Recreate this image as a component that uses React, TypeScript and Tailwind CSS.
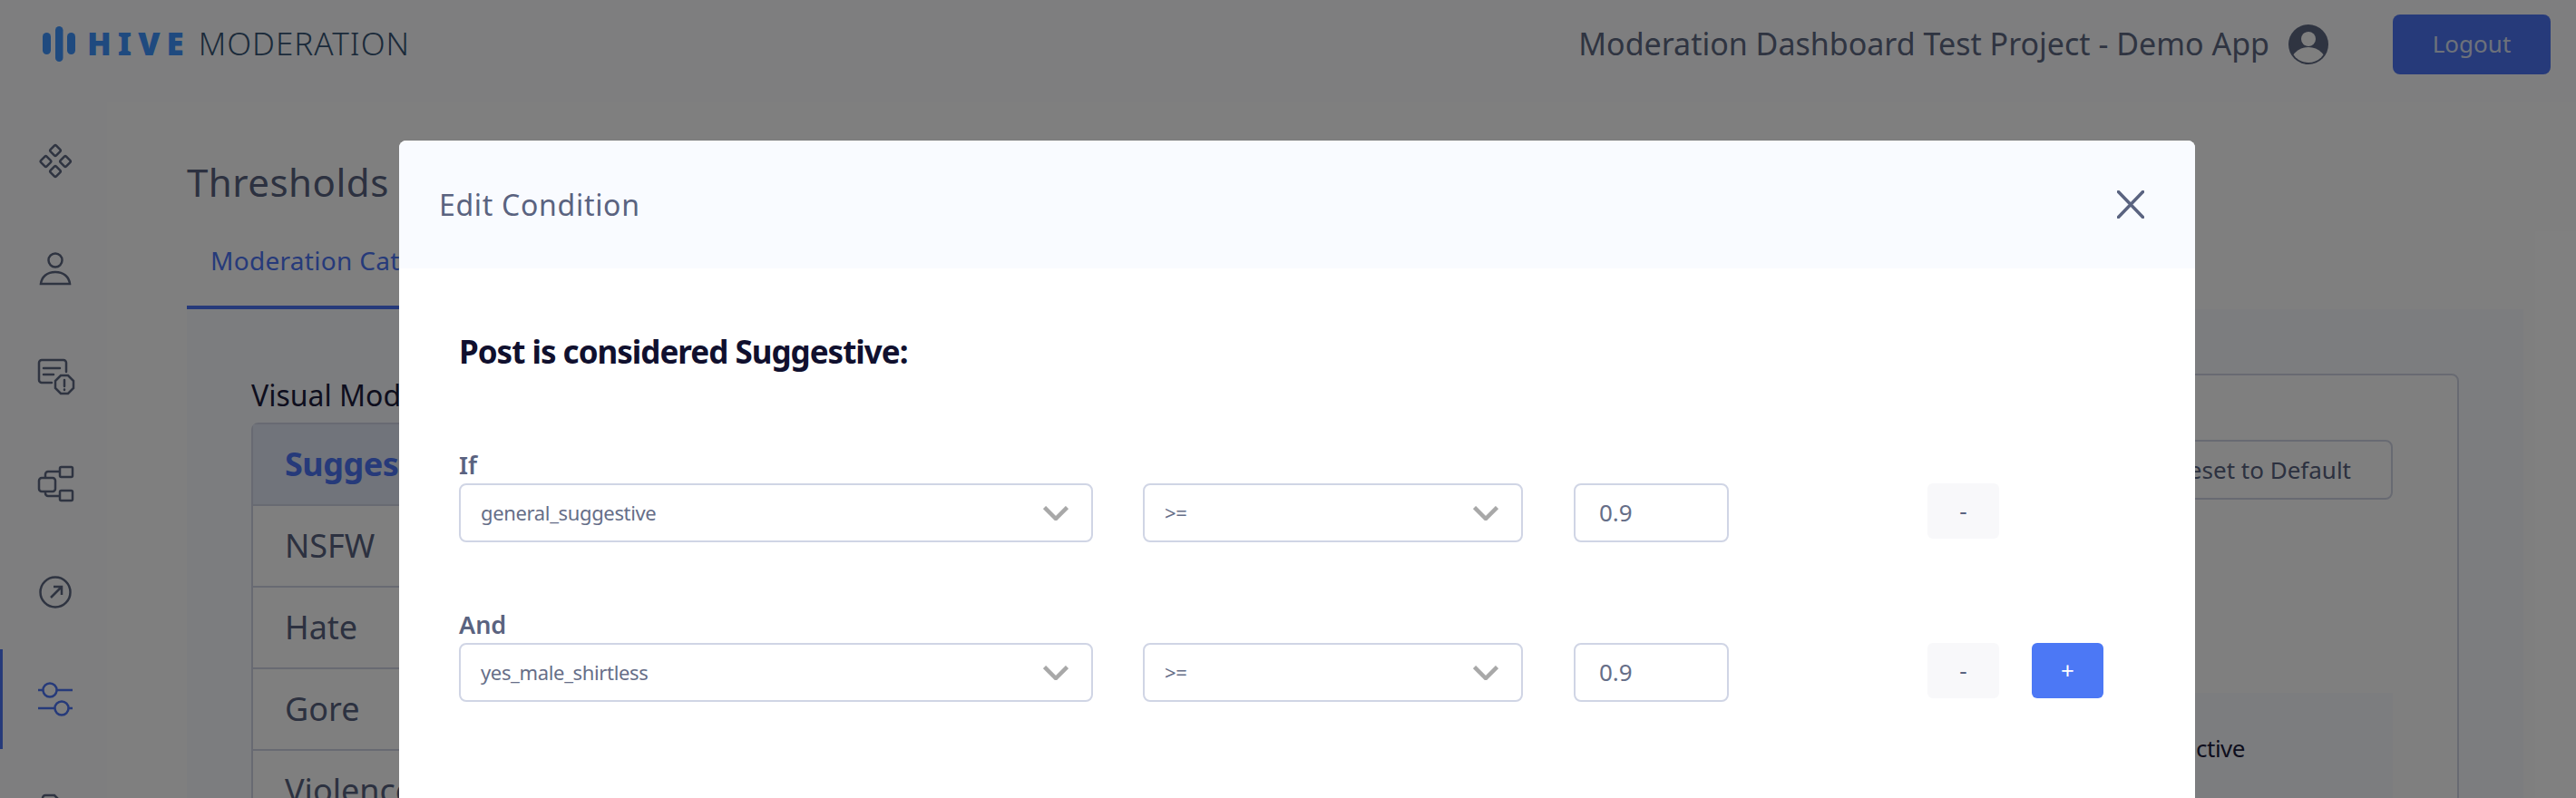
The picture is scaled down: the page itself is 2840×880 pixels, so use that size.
import React from 'react'

function Sidebar() {
  const icons = [
    <g key="a" fill="none" stroke="#5e6882" strokeWidth="2.5">
      <rect x="15.5" y="3.5" width="9" height="9" rx="1.5" transform="rotate(45 20 8)" />
      <rect x="5" y="15.5" width="9" height="9" rx="1.5" transform="rotate(45 9.5 20)" />
      <rect x="26.5" y="15.5" width="9" height="9" rx="1.5" transform="rotate(45 31 20)" />
      <rect x="15.5" y="26.5" width="9" height="9" rx="1.5" transform="rotate(45 20 31)" />
    </g>,
    <g key="b" fill="none" stroke="#5e6882" strokeWidth="2.5">
      <circle cx="20" cy="10" r="7.5" />
      <path d="M4 36 C5 28 11 23 20 23 C29 23 35 28 36 36 Z" />
    </g>,
    <g key="c" fill="none" stroke="#5e6882" strokeWidth="2.5" strokeLinecap="round">
      <path d="M16 27 H5 a3 3 0 0 1-3-3 V5 a3 3 0 0 1 3-3 H29 a3 3 0 0 1 3 3 V15" />
      <path d="M7 11 H25 M7 18 H18" />
      <path d="M26 19 H34 L40 25 V33 L34 39 H26 L20 33 V25 Z" />
      <path d="M30 24 V31 M30 34.5 V35" />
    </g>,
    <g key="d" fill="none" stroke="#5e6882" strokeWidth="2.5">
      <rect x="2" y="13" width="18" height="15" rx="3" />
      <rect x="25" y="1" width="14" height="11" rx="1.5" />
      <rect x="25" y="27" width="14" height="11" rx="1.5" />
      <path d="M9 13 V9 a3 3 0 0 1 3-3 H25 M9 28 V30 a3 3 0 0 0 3 3 H25" />
    </g>,
    <g key="e" fill="none" stroke="#5e6882" strokeWidth="2.5">
      <circle cx="20" cy="20" r="16.5" />
      <path d="M15 26 L27 14 M18 14 H27 V23" />
    </g>,
    <g key="f" fill="#fff" stroke="#4c74f4" strokeWidth="2.5">
      <path d="M1 10 H39 M1 30 H39" />
      <circle cx="14" cy="10" r="7.5" />
      <circle cx="27" cy="30" r="7.5" />
    </g>,
    <g key="g" fill="none" stroke="#5e6882" strokeWidth="2.5">
      <path d="M6 34 V10 a3 3 0 0 1 3-3 H19 L27 15 V34 Z" />
    </g>,
  ]

  return (
    <div className="w-[118px] shrink-0 bg-[#fcfdff] pt-[10px] flex flex-col gap-[8.67px]">
      {icons.map((icon, i) => (
        <div
          key={i}
          className={`h-[110px] shrink-0 flex items-center justify-center border-l-[3px] ${i === 5 ? 'border-[#4c74f4]' : 'border-transparent'}`}
        >
          <svg width="40" height="40" viewBox="0 0 40 40" className="overflow-visible">
            {icon}
          </svg>
        </div>
      ))}
    </div>
  )
}

function Chevron() {
  return (
    <svg width="28" height="16" viewBox="0 0 28 16" fill="none" stroke="#a8a8a8" strokeWidth="4.5">
      <path d="M1.5 1.5 L14 14 L26.5 1.5" />
    </svg>
  )
}

function Select({ value, width }: { value: string; width: string }) {
  return (
    <div className={`${width} h-[65px] border-2 border-[#d0d5e5] rounded-lg flex items-center justify-between pl-[22px] pr-[25px]`}>
      <span className="text-[22px] tracking-[-0.35px] text-[#666e88]">{value}</span>
      <Chevron />
    </div>
  )
}

function ConditionRow({ label, value, plus }: { label: string; value: string; plus?: boolean }) {
  return (
    <div>
      <div className="h-[40px] leading-[40px] text-[27px] font-semibold text-[#5a6380]">{label}</div>
      <div className="flex">
        <Select value={value} width="w-[699px]" />
        <div className="ml-[55px]">
          <Select value=">=" width="w-[419px]" />
        </div>
        <div className="ml-[56px] w-[171px] h-[65px] border-2 border-[#d0d5e5] rounded-lg flex items-center pl-[26px] text-[26px] text-[#666e88]">
          0.9
        </div>
        <div className="ml-[219px] w-[79px] h-[61px] rounded-md bg-[#f8f8fa] flex items-center justify-center text-[26px] text-[#5a6380]">
          -
        </div>
        {plus && (
          <div className="ml-[36px] w-[79px] h-[61px] rounded-md bg-[#4c78f5] flex items-center justify-center text-[26px] text-white">
            +
          </div>
        )}
      </div>
    </div>
  )
}

export default function App() {
  const rows = ['NSFW', 'Hate', 'Gore', 'Violence']

  return (
    <div className="relative w-[2840px] h-[880px] overflow-hidden bg-white font-['Noto_Sans',sans-serif]">
      {/* page under the dialog */}
      <header className="h-[113px] bg-[#fcfdff] flex items-center pl-[47px] pr-[28px] pb-[16px]">
        <svg width="36" height="39" viewBox="0 0 36 39" fill="#3e94ff" className="mr-[13px]">
          <rect x="0" y="7" width="9" height="24" rx="4.5" />
          <rect x="14" y="0" width="8.5" height="39" rx="4.25" />
          <rect x="27" y="7" width="9" height="24" rx="4.5" />
        </svg>
        <span className="text-[35px] font-black tracking-[7px] text-[#3e94ff]">HIVE</span>
        <span className="ml-[9px] text-[35px] font-light tracking-[1px] text-[#365474]">MODERATION</span>
        <span className="ml-auto text-[34px] text-[#5e6882]">Moderation Dashboard Test Project - Demo App</span>
        <svg width="44" height="44" viewBox="0 0 44 44" className="ml-[21px]">
          <clipPath id="avatar">
            <circle cx="22" cy="22" r="20" />
          </clipPath>
          <circle cx="22" cy="22" r="22" fill="#5e6882" />
          <circle cx="22" cy="16" r="8" fill="#fff" />
          <circle cx="22" cy="46" r="21" fill="#fff" clipPath="url(#avatar)" />
        </svg>
        <div className="ml-[71px] w-[174px] h-[66px] rounded-lg bg-[#4c74f4] flex items-center justify-center text-[26px] text-[#dbe2f5]">
          Logout
        </div>
      </header>

      <div className="flex h-[767px]">
        <Sidebar />
        <main className="flex-1 pl-[88px] pr-[58px] flex flex-col">
          <h1 className="mt-[60px] h-[56px] leading-[56px] text-[42px] tracking-[0.5px] text-[#586280]">Thresholds</h1>
          <div className="h-[113px] flex">
            <div className="w-[420px] pl-[26px] pt-[37px] text-[28px] tracking-[0.3px] text-[#4c74f4] border-b-[5px] border-[#4c74f4] box-border h-[113px]">
              Moderation Categories
            </div>
          </div>
          <div className="flex-1 bg-[#f9fbff] pl-[71px] pr-[71px] flex -mt-[1px]">
            <div className="w-[420px] pt-[71px]">
              <div className="h-[54px] text-[32px] text-[#1c1d3c]">Visual Moderation</div>
              <div className="border-2 border-[#d0d5e5] rounded-t-lg">
                <div className="h-[88px] bg-[#e2e8f6] flex items-center pl-[35px] text-[36px] font-bold tracking-[-0.5px] text-[#4c74f4]">Suggestive</div>
                {rows.map(r => (
                  <div key={r} className="h-[90px] border-t-2 border-[#d0d5e5] bg-white flex items-center pl-[35px] text-[36px] text-[#586280]">
                    {r}
                  </div>
                ))}
              </div>
            </div>
            <div className="flex-1 ml-[60px] mt-[71px] bg-white border-2 border-[#d0d5e5] rounded-lg pr-[71px]">
              <div className="mt-[71px] flex justify-end">
                <div className="w-[400px] h-[66px] border-2 border-[#d0d5e5] rounded-lg flex items-center justify-end pr-[44px] text-[26px] text-[#586280]">
                  Reset to Default
                </div>
              </div>
              <div className="mt-[213px] ml-[71px] h-[200px] bg-[#f9fbff] flex justify-end pr-[163px] pt-[42px] text-[26px] tracking-[-0.5px] text-[#1c1d3c]">
                Inactive
              </div>
            </div>
          </div>
        </main>
      </div>

      {/* dialog */}
      <div className="absolute inset-0 bg-black/50 pt-[155px] pl-[440px] pr-[420px]">
        <div className="h-[900px] bg-white rounded-t-lg overflow-hidden">
          <div className="h-[141px] bg-[#f9fbff] flex items-center justify-between pl-[44px] pr-[56px]">
            <span className="text-[32px] tracking-[0.7px] text-[#5a6380]">Edit Condition</span>
            <svg width="30" height="31" viewBox="0 0 30 31" stroke="#5a6380" strokeWidth="3.5" strokeLinecap="round">
              <path d="M1.5 1.5 L28.5 29.5 M28.5 1.5 L1.5 29.5" />
            </svg>
          </div>
          <div className="pl-[66px] pt-[67px]">
            <div className="h-[50px] leading-[50px] text-[35px] font-bold tracking-[-1px] text-[#10102e]">Post is considered Suggestive:</div>
            <div className="mt-[80px]">
              <ConditionRow label="If" value="general_suggestive" />
            </div>
            <div className="mt-[71px]">
              <ConditionRow label="And" value="yes_male_shirtless" plus />
            </div>
          </div>
        </div>
      </div>
    </div>
  )
}
